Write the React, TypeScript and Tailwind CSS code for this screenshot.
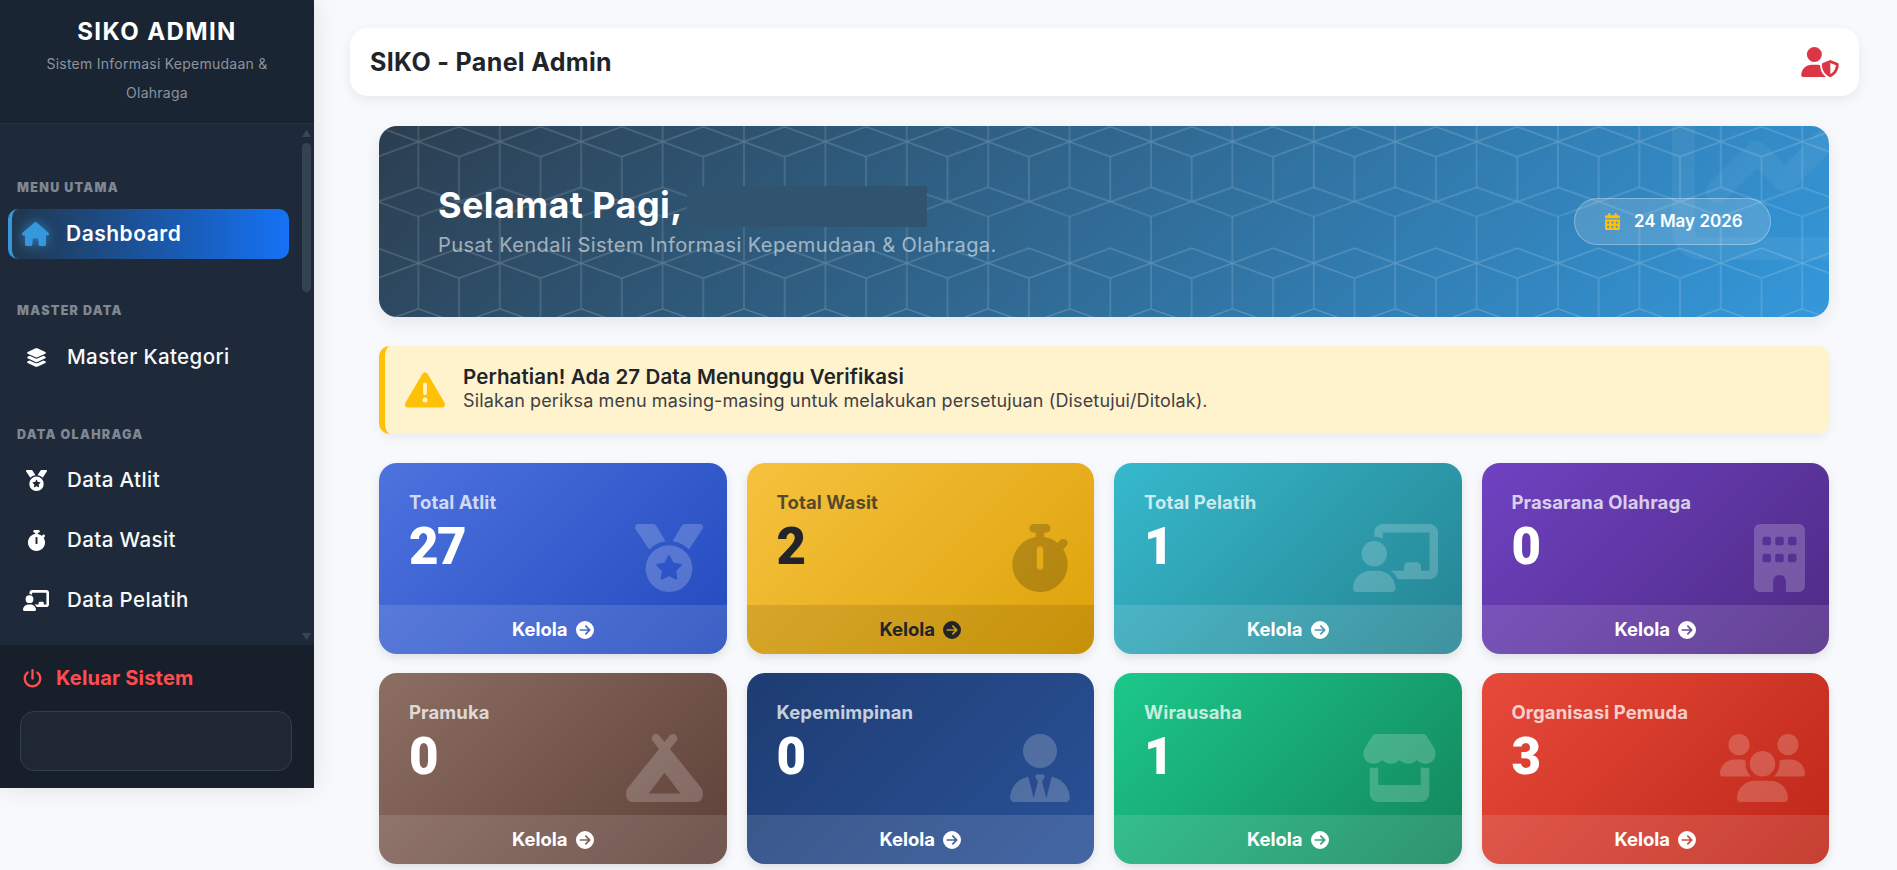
import type { ReactNode } from "react";
import {
  FaBuilding,
  FaCalendarDays,
  FaCampground,
  FaChalkboardUser,
  FaChartLine,
  FaCircleArrowRight,
  FaHouse,
  FaLayerGroup,
  FaMedal,
  FaPowerOff,
  FaStopwatch,
  FaStore,
  FaTriangleExclamation,
  FaUserShield,
  FaUserTie,
  FaUsers,
} from "react-icons/fa6";

type Stat = {
  label: string;
  value: string;
  icon: ReactNode;
  bg: string;
  dark?: boolean;
};

const stats: Stat[] = [
  { label: "Total Atlit", value: "27", icon: <FaMedal className="h-[68px] w-[68px]" />, bg: "bg-[linear-gradient(135deg,#4e73df,#224abe)]" },
  { label: "Total Wasit", value: "2", icon: <FaStopwatch className="h-[68px] w-[60px]" />, bg: "bg-[linear-gradient(135deg,#f6c23e,#dda20a)]", dark: true },
  { label: "Total Pelatih", value: "1", icon: <FaChalkboardUser className="h-[68px] w-[85px]" />, bg: "bg-[linear-gradient(135deg,#36b9cc,#258391)]" },
  { label: "Prasarana Olahraga", value: "0", icon: <FaBuilding className="h-[68px] w-[51px]" />, bg: "bg-[linear-gradient(135deg,#6f42c1,#4e2a84)]" },
  { label: "Pramuka", value: "0", icon: <FaCampground className="h-[68px] w-[77px]" />, bg: "bg-[linear-gradient(135deg,#8d6e63,#5d4037)]" },
  { label: "Kepemimpinan", value: "0", icon: <FaUserTie className="h-[68px] w-[60px]" />, bg: "bg-[linear-gradient(135deg,#1e3c72,#2a5298)]" },
  { label: "Wirausaha", value: "1", icon: <FaStore className="h-[68px] w-[77px]" />, bg: "bg-[linear-gradient(135deg,#1cc88a,#13855c)]" },
  { label: "Organisasi Pemuda", value: "3", icon: <FaUsers className="h-[68px] w-[85px]" />, bg: "bg-[linear-gradient(135deg,#e74a3b,#be2617)]" },
];

function SectionTitle({ children, className }: { children: ReactNode; className: string }) {
  return (
    <div className={`pl-[17px] text-[12.5px] leading-[16px] font-black tracking-[1.3px] text-[#7f8792] ${className}`}>
      {children}
    </div>
  );
}

function NavItem({ icon, label }: { icon: ReactNode; label: string }) {
  return (
    <div className="mb-[10px] flex h-[50px] items-center pl-[23px] text-[20.5px] font-medium tracking-[0.4px] text-[#f8f9fa]">
      <span className="mr-[18px] flex w-[26px] justify-center text-white">{icon}</span>
      {label}
    </div>
  );
}

function Sidebar() {
  return (
    <aside className="flex h-[788px] w-[314px] shrink-0 flex-col bg-[#1e2a3a] shadow-[0_0_24px_rgba(0,0,0,0.1)]">
      <div className="h-[124px] shrink-0 border-b border-[#253142] bg-[#1a2533] pt-[16px] text-center">
        <div className="text-[24px] leading-[32px] font-bold tracking-[1.4px] text-white">SIKO ADMIN</div>
        <div className="mt-[1px] px-[30px] text-[14px] leading-[29px] tracking-[0.25px] text-[#8d939c]">
          Sistem Informasi Kepemudaan &amp; Olahraga
        </div>
      </div>

      <div className="flex h-[521px] shrink-0">
        <nav className="w-[302px] pt-[56px]">
          <SectionTitle className="mb-[13px]">MENU UTAMA</SectionTitle>
          <div className="ml-[8px] flex h-[50px] w-[281px] items-center rounded-[10px] border-l-[4px] border-[#3498db] bg-[linear-gradient(90deg,rgba(52,152,219,0.12),#1572f5)] pl-[10px] text-[21px] font-semibold tracking-[0.5px] text-white">
            <span className="flex w-[44px] text-[#3498db] [filter:drop-shadow(0_0_6px_rgba(52,152,219,0.7))]">
              <FaHouse className="h-[24px] w-[27px]" />
            </span>
            Dashboard
          </div>

          <SectionTitle className="mt-[44px] mb-[13px]">MASTER DATA</SectionTitle>
          <NavItem icon={<FaLayerGroup className="h-[21px] w-[21px]" />} label="Master Kategori" />

          <SectionTitle className="mt-[45px] mb-[12px]">DATA OLAHRAGA</SectionTitle>
          <NavItem icon={<FaMedal className="h-[21px] w-[21px]" />} label="Data Atlit" />
          <NavItem icon={<FaStopwatch className="h-[21px] w-[19px]" />} label="Data Wasit" />
          <NavItem icon={<FaChalkboardUser className="h-[21px] w-[26px]" />} label="Data Pelatih" />
        </nav>

        {/* scrollbar of the menu */}
        <div className="flex w-[12px] flex-col items-start pt-[6px]">
          <svg width="9" height="7" viewBox="0 0 9 7" className="fill-[#384656]">
            <path d="M4.5 0 9 7H0z" />
          </svg>
          <div className="mt-[6px] h-[149px] w-[9px] rounded-full bg-[#344252]" />
          <svg width="9" height="7" viewBox="0 0 9 7" className="mt-[341px] fill-[#384656]">
            <path d="M4.5 7 0 0h9z" />
          </svg>
        </div>
      </div>

      <div className="flex-1 bg-[#171f2b] pt-[19px]">
        <div className="flex h-[28px] items-center pl-[23px] text-[20px] font-bold tracking-[0.2px] text-[#ff4d4f]">
          <FaPowerOff size={19} className="mr-[14px]" />
          Keluar Sistem
        </div>
        <div className="mt-[19px] ml-[20px] h-[60px] w-[272px] rounded-[14px] border-[1.5px] border-[#333f4d] bg-[#1e2733]" />
      </div>
    </aside>
  );
}

function Hero() {
  return (
    <section className="relative h-[191px] overflow-hidden rounded-[18px] bg-[linear-gradient(135deg,#2c3e50,#3498db)] shadow-[0_6px_18px_rgba(0,0,0,0.08)]">
      <svg className="absolute inset-0 h-full w-full" aria-hidden="true">
        <defs>
          <pattern id="cubes" width="81.4" height="121.5" patternUnits="userSpaceOnUse" patternTransform="translate(39.4 15.7)">
            <path
              d="M0 0L40.7 15L81.4 0M0 121.5L40.7 106.5L81.4 121.5M0 0V45.6M81.4 0V45.6M40.7 15V60M0 45.6L40.7 60L81.4 45.6M0 75L40.7 60L81.4 75M0 75V121.5M81.4 75V121.5"
              fill="none"
              stroke="#ffffff"
              strokeOpacity="0.2"
              strokeWidth="1.2"
            />
          </pattern>
        </defs>
        <rect width="100%" height="100%" fill="url(#cubes)" />
      </svg>
      <FaChartLine size={181} className="absolute top-[-36px] right-[-24px] text-white/5" />

      <div className="relative flex h-full items-center justify-between pr-[58px] pl-[59px]">
        <div className="pb-[3px]">
          <div className="flex h-[48px] items-start text-[36px] leading-[44px] font-bold tracking-[0.4px] text-white">
            Selamat Pagi,
            <span className="mt-[3px] ml-[4px] inline-block h-[41px] w-[240px] bg-[#30536f]" />
          </div>
          <div className="mt-[1px] text-[20px] leading-[26px] tracking-[0.43px] text-white/55">
            Pusat Kendali Sistem Informasi Kepemudaan &amp; Olahraga.
          </div>
        </div>
        <div className="flex h-[47px] w-[197px] items-center rounded-full border border-white/30 bg-white/15 pl-[29px] text-[17px] font-semibold text-white">
          <FaCalendarDays size={17} className="mr-[13px] text-[#ffc107]" />
          24 May 2026
        </div>
      </div>
    </section>
  );
}

function Alert() {
  return (
    <section className="mt-[29px] flex h-[88px] items-center rounded-[11px] border-l-[6px] border-[#ffc107] bg-[#fff3cd] pl-[20px] shadow-[0_4px_10px_rgba(0,0,0,0.06)]">
      <FaTriangleExclamation size={40} className="mr-[18px] text-[#ffc107]" />
      <div className="pb-[2px] text-[#212529]">
        <div className="text-[20.5px] leading-[24px] font-semibold tracking-[0.1px]">Perhatian! Ada 27 Data Menunggu Verifikasi</div>
        <div className="text-[18px] leading-[24px] tracking-[0.13px] text-[#3f4145]">
          Silakan periksa menu masing-masing untuk melakukan persetujuan (Disetujui/Ditolak).
        </div>
      </div>
    </section>
  );
}

function StatCard({ stat }: { stat: Stat }) {
  return (
    <div className={`flex h-[191px] flex-col overflow-hidden rounded-[18px] shadow-[0_4px_10px_rgba(0,0,0,0.1)] ${stat.bg}`}>
      <div className="flex h-[142px] justify-between pt-[27px] pr-[24px] pl-[30px]">
        <div>
          <div className={`text-[18.5px] leading-[24px] font-bold tracking-[0.1px] ${stat.dark ? "text-[#212529]/75" : "text-white/75"}`}>
            {stat.label}
          </div>
          <div className={`mt-[4px] font-['Roboto',sans-serif] text-[51px] leading-[58px] font-black tracking-[-1.5px] ${stat.dark ? "text-[#212529]" : "text-white"}`}>
            {stat.value}
          </div>
        </div>
        <div className={`pt-[34px] ${stat.dark ? "text-black/20" : "text-white/20"}`}>{stat.icon}</div>
      </div>
      <div className={`flex flex-1 items-center justify-center pt-[1px] text-[18.5px] font-bold ${stat.dark ? "bg-black/10 text-[#212529]" : "bg-white/[0.12] text-white"}`}>
        Kelola
        <FaCircleArrowRight size={18} className="ml-[8px]" />
      </div>
    </div>
  );
}

export default function App() {
  return (
    <div className="flex h-[870px] items-start overflow-hidden bg-[#f8f9fc] font-['Inter',sans-serif]">
      <Sidebar />
      <main className="min-w-0 flex-1 pt-[28px] pr-[38px] pl-[36px]">
        <header className="flex h-[68px] items-center justify-between rounded-[18px] bg-white pr-[20px] pl-[20px] shadow-[0_4px_12px_rgba(0,0,0,0.07)]">
          <h1 className="pt-[2px] text-[25px] font-bold tracking-[0.35px] text-[#212529]">SIKO - Panel Admin</h1>
          <FaUserShield className="h-[30px] w-[38px] text-[#dc3545]" />
        </header>

        <div className="mt-[30px] pr-[30px] pl-[29px]">
          <Hero />
          <Alert />
          <div className="mt-[29px] grid grid-cols-4 gap-x-[20px] gap-y-[19px]">
            {stats.map((s) => (
              <StatCard key={s.label} stat={s} />
            ))}
          </div>
        </div>
      </main>
    </div>
  );
}
